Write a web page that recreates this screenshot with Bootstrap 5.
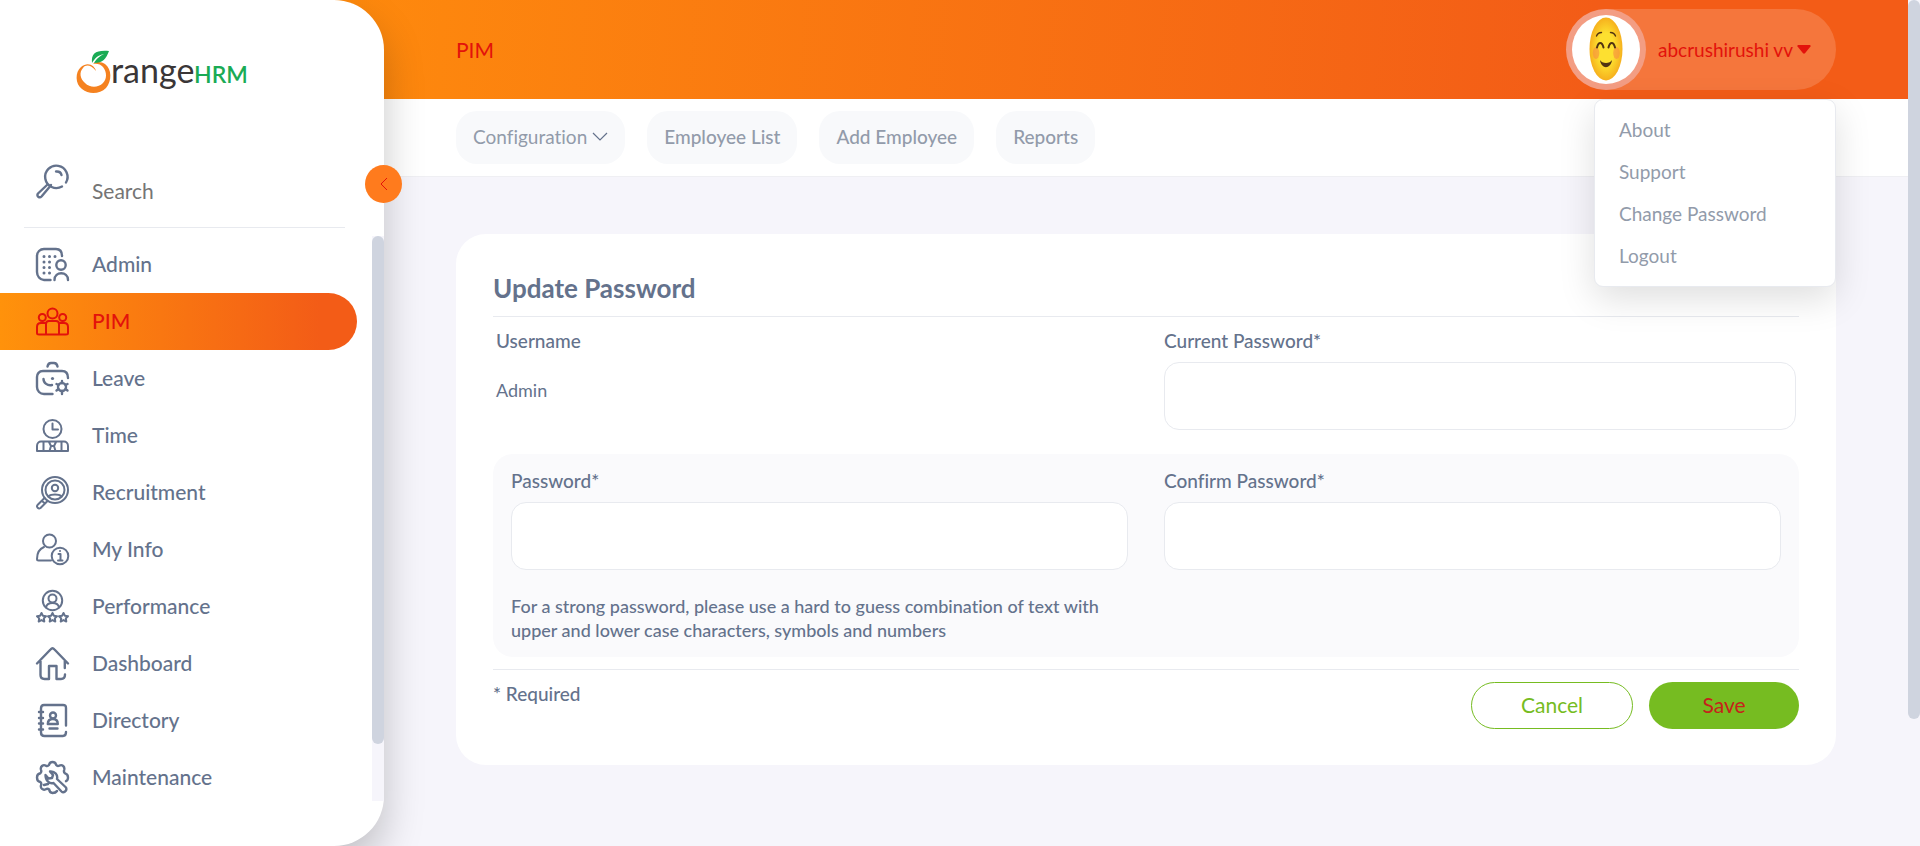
<!DOCTYPE html>
<html lang="en">
<head>
<meta charset="utf-8">
<meta name="viewport" content="width=device-width, initial-scale=1">
<title>OrangeHRM</title>
<link href="https://cdn.jsdelivr.net/npm/bootstrap@5.3.0/dist/css/bootstrap.min.css" rel="stylesheet">
<style>
  :root { --ink: #64728c; --red: #e3120b; --soft: #929baa; --rule: #e8eaef; --thumb: #cfd4df; --back: #f6f5fb; }
  body { font-family: Lato, "Open Sans", sans-serif; font-weight: 500; font-size: 18px; line-height: 24px; color: var(--ink); background: var(--back); }
  body, button { font-variant-ligatures: no-common-ligatures; }
  .side { width: 384px; border-radius: 0 50px 50px 0; box-shadow: 0 20px 40px rgba(0,0,0,.22); z-index: 3; }
  .brand { padding: 47px 0 0 74px; height: 166px; }
  .search-row { padding: 0 0 28px 12px; margin: 0 39px 0 24px; border-bottom: 1px solid var(--rule); gap: 23px; height: 63px; }
  .search-row input { background: none; color: var(--ink); height: 30px; margin-top: 11px; font-size: 21px; font-weight: 400; }
  .search-row input::placeholder { color: #757575; opacity: 1; }
  .side-list { margin: 8px 0 45px; }
  .side-link { height: 57px; padding-left: 36px; gap: 23px; margin-right: 15px; color: var(--ink); font-size: 21px; border-radius: 0 29px 29px 0; }
  .side-link.on { color: var(--red); background: linear-gradient(90deg, #ff920b, #f35c17 90%); }
  .ico { width: 33px; height: 33px; flex: none; overflow: visible; fill: none; stroke: currentColor; stroke-width: 2.4; stroke-linecap: round; stroke-linejoin: round; }
  .ico-fine { stroke-width: 2; }
  .track { width: 12px; background: var(--back); }
  .thumb { background: var(--thumb); border-radius: 6px; }
  .fold { right: -18px; top: 165px; width: 37px; height: 38px; background: #ff7b1d; }
  .topbar { height: 99px; background: linear-gradient(94deg, #fe8a0d, #f35c17 80%); margin-left: -50px; padding: 0 72px 0 122px; }
  .topbar h1 { font-size: 21px; color: var(--red); font-weight: 400; }
  .user { height: 81px; width: 270px; border-radius: 41px; background: rgba(255,255,255,.16); color: var(--red); font-size: 19px; font-weight: 400; }
  .face { width: 80px; height: 81px; background: rgba(240,190,190,.55); padding: 6px; }
  .menu { width: 242px; top: 90px; right: 0; border: 1px solid #e8eaef; border-radius: 9px; padding: 9px 0; box-shadow: 0 12px 36px rgba(0,0,0,.13); z-index: 5; }
  .menu a { height: 42px; padding: 0 24px; color: var(--soft); font-size: 19px; font-weight: 400; }
  .tabs-bar { height: 78px; padding: 12px 72px 13px; gap: 22px; border-bottom: 1px solid #efeff3; }
  .pill { height: 53px; padding: 0 17px 2px; border-radius: 21px; background: #f8f9fb; color: var(--soft); border: 0; gap: 5px; font-size: 19px; }
  .sheet { margin: 57px 72px 0; border-radius: 30px; padding: 36px 37px; }
  .sheet h2 { font-size: 26px; line-height: 36px; font-weight: 700; }
  .rule { height: 1px; background: var(--rule); }
  .rule-top { margin-top: 10px; }
  .pair { display: grid; grid-template-columns: 1fr 1fr; gap: 36px; }
  .pair label, .cap { display: block; margin-bottom: 9px; }
  .pair label, .cap, .note { font-size: 19px; }
  .pair-top { padding: 12px 3px 0; }
  .value { padding-top: 16px; font-weight: 400; }
  .hint { font-weight: 500; }
  .box { height: 68px; border: 1px solid var(--rule); border-radius: 15px; background: #fff; padding: 0 18px; }
  .shade { background: #fafafc; border-radius: 20px; padding: 15px 18px; margin: 24px 0 12px; }
  .act { height: 47px; border-radius: 24px; font-size: 21px; padding-bottom: 3px; }
  .act-line { width: 162px; border: 1px solid #76bc21; color: #76bc21; background: #fff; }
  .act-fill { width: 150px; border: 0; color: #c5221b; background: #76bc21; }
</style>
</head>
<body>
<div class="d-flex vh-100 overflow-hidden">

  <aside class="side bg-white position-relative d-flex flex-column flex-shrink-0">
    <div class="brand">
      <svg width="180" height="52" viewBox="0 0 180 52" role="img" aria-label="OrangeHRM">
        <path d="M7 20C1 25 1 37 8 42c7 6 18 5 24-1 6-7 6-19-1-24-3-2-9-3-12 0 3-1 8 0 10 3 4 5 4 12 0 16-5 5-13 5-18 0-5-4-6-11-2-15 3-4 8-3 13 3-1-5-8-10-15-4z" fill="#f58220"/>
        <path d="M18 16C17 6 22 3 35 4 32 12 29 16 20 16c3-5 6-7 10-9-6 1-9 4-12 9z" fill="#1aab55"/>
        <text x="37" y="36" font-size="34" font-weight="400" fill="#3a3637">range</text>
        <text x="120" y="36" font-size="23" font-weight="600" fill="#1aab55">HRM</text>
      </svg>
    </div>
    <div class="search-row d-flex">
      <svg class="ico" viewBox="0 0 33 33"><path d="M30 17.500a11.200 11.200 0 1 0-4 4M20 6.500c3-.3 5 1.300 5.500 3.500"/><path d="M11 20l-9 8.500c-2 2.500 1.500 5 3.500 3l8-9.500M13.500 22l1.500-2"/></svg>
      <input class="border-0 p-0 w-75" type="text" placeholder="Search" aria-label="Search">
    </div>
    <div class="side-list d-flex flex-grow-1 overflow-hidden">
      <nav class="flex-grow-1" aria-label="Modules">
        <a href="#" class="side-link d-flex align-items-center text-decoration-none">
          <svg class="ico" viewBox="0 0 33 33"><path d="M26 8c0-4-2-7-6-7H8C4 1 1 4 1 8v16c0 4 3 8 7 8h6.500"/><circle cx="25" cy="17" r="4.700"/><path d="M18.500 32c0-9 13.500-9 13.500 0"/><path d="M8 8.500h.01M13.500 8.500h.01M19 8.500h.01M8 14h.01M13.500 14h.01M8 19.500h.01M13.500 19.500h.01M8 25h.01M13.500 25h.01" stroke-width="3"/></svg>
          Admin</a>
        <a href="#" class="side-link on d-flex align-items-center text-decoration-none" aria-current="page">
          <svg class="ico ico-fine" viewBox="0 0 33 33"><circle cx="16.500" cy="8.500" r="5"/><circle cx="6.300" cy="12.500" r="3.500"/><circle cx="26.700" cy="12.500" r="3.500"/><path d="M10 29.500V19c0-2 1-3 3-3h7c2 0 3 1 3 3v10.500M10 18H5c-3 0-4 2-4 4v6c0 1 1 1.500 2 1.500h27c1 0 2-.5 2-1.500v-6c0-2-1-4-4-4h-5"/></svg>
          PIM</a>
        <a href="#" class="side-link d-flex align-items-center text-decoration-none">
          <svg class="ico" viewBox="0 0 33 33"><path d="M11.500 4.500C12 2 13 1 15 1h3c2 0 3 1 3.500 3.500M32 16c0-4-2-7-6-7H7c-4 0-6 3-6 6v10c0 4 3 7 7 7h8.500M7.500 17c0 4 4 7 8.500 6"/><path d="M16.500 16.500h.01" stroke-width="3.200"/><circle cx="26" cy="25" r="4"/><path d="M26 19v2M26 29v3M20.500 22l2 1M31.500 22l-2 1M20.500 28.500l2-1.500M31.500 28.500l-2-1.500"/></svg>
          Leave</a>
        <a href="#" class="side-link d-flex align-items-center text-decoration-none">
          <svg class="ico ico-fine" viewBox="0 0 33 33"><circle cx="16.500" cy="10" r="9"/><path d="M16.500 4.500v6h5.500"/><path d="M1 32v-5c0-3 2-4.500 4-4.500h23c2 0 4 1.500 4 4.500v5zM7.500 22.500V32M25.500 22.500V32M13 23l2 4-1.500 5M20 23l-2 4 1.500 5M15 27h3"/></svg>
          Time</a>
        <a href="#" class="side-link d-flex align-items-center text-decoration-none">
          <svg class="ico ico-fine" viewBox="0 0 33 33"><circle cx="19" cy="14" r="13"/><circle cx="19" cy="14" r="9.500"/><circle cx="19" cy="12" r="3.200"/><path d="M13 20c2-2 10-2 12 0M8.500 22l-7 7c-1.500 2 1 4.500 3 3l7-7M6 25l3 2.500"/></svg>
          Recruitment</a>
        <a href="#" class="side-link d-flex align-items-center text-decoration-none">
          <svg class="ico ico-fine" viewBox="0 0 33 33"><circle cx="13.500" cy="8" r="6.500"/><path d="M8 14C3 16 1 21 1 26c0 1 .5 1.500 1.500 1.500H15"/><circle cx="24" cy="23" r="8.300"/><path d="M22.500 21h2v6.500M22 27.500h4.500M24 18h.01"/></svg>
          My Info</a>
        <a href="#" class="side-link d-flex align-items-center text-decoration-none">
          <svg class="ico ico-fine" viewBox="0 0 33 33"><circle cx="16.500" cy="10.500" r="9.700"/><circle cx="16.500" cy="8.500" r="4"/><path d="M10 17.500c1-6 12-6 13 0"/><path d="M5.500 23l1.400 2.700 3.100.5-2.200 2.200.5 3.100-2.800-1.400-2.800 1.400.5-3.100L1 26.200l3.100-.5zM16.500 23l1.400 2.700 3.100.5-2.200 2.200.5 3.100-2.800-1.400-2.800 1.400.5-3.100-2.200-2.200 3.100-.5zM27.500 23l1.400 2.700 3.100.5-2.200 2.200.5 3.100-2.800-1.400-2.800 1.400.5-3.100-2.200-2.200 3.100-.5z"/></svg>
          Performance</a>
        <a href="#" class="side-link d-flex align-items-center text-decoration-none">
          <svg class="ico" viewBox="0 0 33 33"><path d="M1 16.500L14.500 2.500c1.500-1.700 2.500-1.700 4 0L32 16.500M4.500 14v14c0 3 2 4 4 4H13V19h7.500v13H25c3 0 4-1.500 4-4.500M28.800 14v7"/></svg>
          Dashboard</a>
        <a href="#" class="side-link d-flex align-items-center text-decoration-none">
          <svg class="ico" viewBox="0 0 33 33"><path d="M30 21.500V4c0-2-1-3-3-3H8C6 1 5 2.500 5 4.500v24C5 31 6.500 32 8.500 32H27c2 0 3-1 3-4M3 8h4M3 14h4M3 19.500h4M3 25.500h4M13.500 24.500h8M11.800 20c0-3.500 1.500-5 5-5s5 1.500 5 5z"/><circle cx="17" cy="11.500" r="3"/></svg>
          Directory</a>
        <a href="#" class="side-link d-flex align-items-center text-decoration-none">
          <svg class="ico" viewBox="0 0 33 33"><path d="M21 30c-1 1.500-2 2-4.500 2-2-.2-3-1-3.300-3.500-1.200-1-2.200-1-3.500-.2-2.700 1.400-5.500-1-4.700-4 .6-1.600.3-2.500-.7-3.300C1.500 20.500 1 18.500 1 16.500s.8-3.700 3.300-4.200c1-.8 1.300-1.900.7-3.500-.9-3 2-5.700 4.800-4.200 1.200.6 2.300.4 3.200-.6C13.500 1.800 14.700 1 16.500 1s3.200.9 3.700 3c.8 1 1.900 1.200 3.200.6 2.800-1.500 5.600 1.200 4.800 4.200-.6 1.600-.2 2.700.8 3.500 2.300.5 3 2.200 3 4.200 0 1.500-.5 3-2 3.700M9.500 14c0 6 4 9 8 8l8 8.500c2 2 6-.5 4.500-4l-9-8.500c1-4-2-8-7-7.500l3 3.500-1 3-3.500.5-3-3.500zM8 24l4-1"/></svg>
          Maintenance</a>
      </nav>
      <div class="track"><div class="thumb" style="height:90%"></div></div>
    </div>
    <button type="button" class="fold position-absolute rounded-circle border-0 p-0 d-flex align-items-center justify-content-center" aria-label="Collapse menu">
      <svg width="8" height="14" viewBox="0 0 8 14" fill="none" stroke="#e3120b" stroke-width="1"><path d="M7 1L1 7l6 6"/></svg>
    </button>
  </aside>

  <div class="flex-grow-1 d-flex flex-column">
    <header class="topbar d-flex align-items-center justify-content-between">
      <h1 class="m-0">PIM</h1>
      <div class="position-relative">
        <button type="button" class="user border-0 p-0 d-flex align-items-center" aria-expanded="true">
          <span class="face rounded-circle">
            <svg class="d-block" width="68" height="69" viewBox="0 0 68 69">
              <defs><radialGradient id="skin" cy=".5"><stop offset=".5" stop-color="#fde030"/><stop offset="1" stop-color="#f6b01d"/></radialGradient></defs>
              <ellipse cx="34" cy="34.500" rx="34" ry="34.500" fill="#fff"/>
              <ellipse cx="34" cy="34" rx="16.500" ry="31.500" fill="url(#skin)"/>
              <ellipse cx="24" cy="38" rx="3.300" ry="6" fill="#f7923f" opacity=".65"/><ellipse cx="44.500" cy="38" rx="3.300" ry="6" fill="#f7923f" opacity=".65"/>
              <g fill="none" stroke="#513312" stroke-linecap="round"><path d="M24.500 21c1-2.500 3-3.500 5-3.500M43.500 21c-1-2.500-3-3.500-5-3.500" stroke-width="1.400"/><path d="M25 32.500c1.500-6 5-6 6.500 0M36.500 32.500c1.500-6 5-6 6.500 0" stroke-width="2"/></g>
              <path d="M28 45c1 9.500 11 9.500 12 0-2 4-10 4-12 0z" fill="#513312"/>
            </svg>
          </span>
          <span class="ms-2 ps-1 me-1">abcrushirushi vv</span>
          <svg width="14" height="9" viewBox="0 0 14 9" fill="#e3120b"><path d="M1 0h12q1 .5.500 1.500L8 8.300q-1 .9-2 0L.5 1.500Q0 .5 1 0z"/></svg>
        </button>
        <div class="menu position-absolute bg-white">
          <a href="#" class="d-flex align-items-center text-decoration-none">About</a>
          <a href="#" class="d-flex align-items-center text-decoration-none">Support</a>
          <a href="#" class="d-flex align-items-center text-decoration-none">Change Password</a>
          <a href="#" class="d-flex align-items-center text-decoration-none">Logout</a>
        </div>
      </div>
    </header>

    <nav class="tabs-bar bg-white d-flex" aria-label="PIM">
      <button type="button" class="pill d-flex align-items-center">Configuration
        <svg width="16" height="10" viewBox="0 0 16 10" fill="none" stroke="#64728c" stroke-width="1.200"><path d="M1 1l7 7 7-7"/></svg></button>
      <a href="#" class="pill d-flex align-items-center text-decoration-none">Employee List</a>
      <a href="#" class="pill d-flex align-items-center text-decoration-none">Add Employee</a>
      <a href="#" class="pill d-flex align-items-center text-decoration-none">Reports</a>
    </nav>

    <form class="sheet bg-white">
      <h2 class="m-0">Update Password</h2>
      <div class="rule rule-top"></div>
      <div class="pair pair-top">
        <div><span class="cap">Username</span><div class="value">Admin</div></div>
        <div><label for="cur">Current Password*</label><input id="cur" class="box w-100" type="password"></div>
      </div>
      <div class="shade">
        <div class="pair">
          <div><label for="new">Password*</label><input id="new" class="box w-100" type="password">
            <p class="hint mt-4 mb-0">For a strong password, please use a hard to guess combination of text with upper and lower case characters, symbols and numbers</p></div>
          <div><label for="rep">Confirm Password*</label><input id="rep" class="box w-100" type="password"></div>
        </div>
      </div>
      <div class="rule"></div>
      <div class="d-flex justify-content-between pt-2 mt-1">
        <span class="note">* Required</span>
        <div class="d-flex gap-3">
          <button type="button" class="act act-line">Cancel</button>
          <button type="submit" class="act act-fill">Save</button>
        </div>
      </div>
    </form>
  </div>

  <div class="track flex-shrink-0"><div class="thumb" style="height:85%"></div></div>
</div>
<script src="https://cdn.jsdelivr.net/npm/bootstrap@5.3.0/dist/js/bootstrap.bundle.min.js"></script>
</body>
</html>
